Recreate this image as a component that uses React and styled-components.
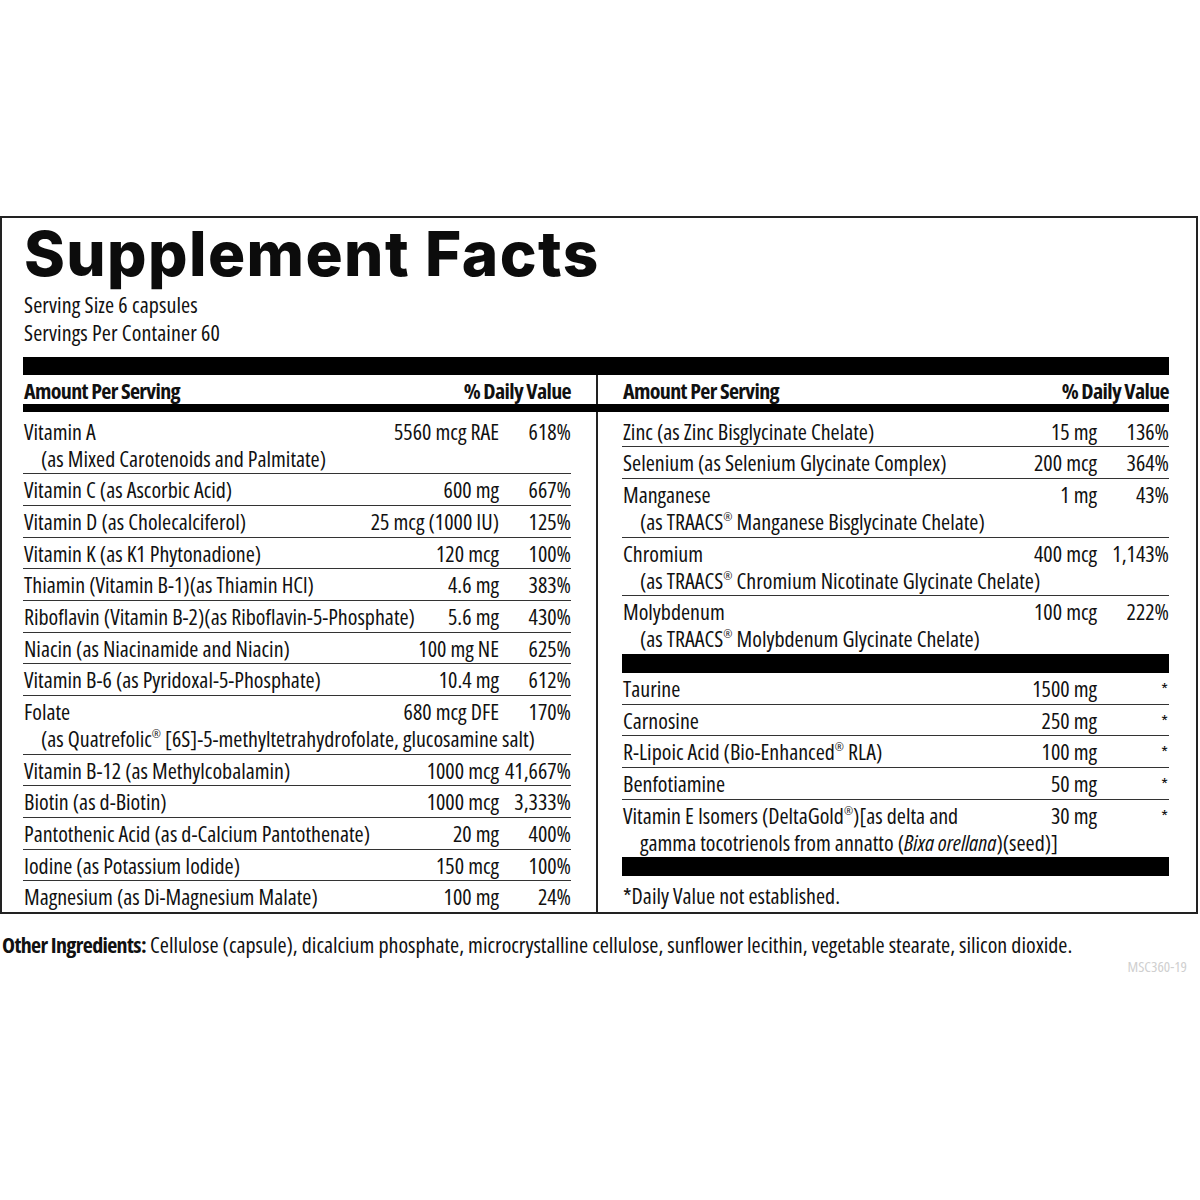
import React from 'react'
import styled, { createGlobalStyle } from 'styled-components'

const GlobalStyle = createGlobalStyle`
  body {
    margin: 0;
    background: #fff;
    color: #111;
  }
`

const Reg = styled.sup`
  font-size: 0.5em;
  line-height: 0;
  vertical-align: 0.8em;
`

const left = [
  { name: 'Vitamin A', sub: '(as Mixed Carotenoids and Palmitate)', amount: '5560 mcg RAE', dv: '618%' },
  { name: 'Vitamin C (as Ascorbic Acid)', amount: '600 mg', dv: '667%' },
  { name: 'Vitamin D (as Cholecalciferol)', amount: '25 mcg (1000 IU)', dv: '125%' },
  { name: 'Vitamin K (as K1 Phytonadione)', amount: '120 mcg', dv: '100%' },
  { name: 'Thiamin (Vitamin B-1)(as Thiamin HCl)', amount: '4.6 mg', dv: '383%' },
  { name: 'Riboflavin (Vitamin B-2)(as Riboflavin-5-Phosphate)', amount: '5.6 mg', dv: '430%' },
  { name: 'Niacin (as Niacinamide and Niacin)', amount: '100 mg NE', dv: '625%' },
  { name: 'Vitamin B-6 (as Pyridoxal-5-Phosphate)', amount: '10.4 mg', dv: '612%' },
  {
    name: 'Folate',
    sub: <>(as Quatrefolic<Reg>®</Reg> [6S]-5-methyltetrahydrofolate, glucosamine salt)</>,
    amount: '680 mcg DFE',
    dv: '170%'
  },
  { name: 'Vitamin B-12 (as Methylcobalamin)', amount: '1000 mcg', dv: '41,667%' },
  { name: 'Biotin (as d-Biotin)', amount: '1000 mcg', dv: '3,333%' },
  { name: 'Pantothenic Acid (as d-Calcium Pantothenate)', amount: '20 mg', dv: '400%' },
  { name: 'Iodine (as Potassium Iodide)', amount: '150 mcg', dv: '100%' },
  { name: 'Magnesium (as Di-Magnesium Malate)', amount: '100 mg', dv: '24%' }
]

const minerals = [
  { name: 'Zinc (as Zinc Bisglycinate Chelate)', amount: '15 mg', dv: '136%' },
  { name: 'Selenium (as Selenium Glycinate Complex)', amount: '200 mcg', dv: '364%' },
  {
    name: 'Manganese',
    sub: <>(as TRAACS<Reg>®</Reg> Manganese Bisglycinate Chelate)</>,
    amount: '1 mg',
    dv: '43%'
  },
  {
    name: 'Chromium',
    sub: <>(as TRAACS<Reg>®</Reg> Chromium Nicotinate Glycinate Chelate)</>,
    amount: '400 mcg',
    dv: '1,143%'
  },
  {
    name: 'Molybdenum',
    sub: <>(as TRAACS<Reg>®</Reg> Molybdenum Glycinate Chelate)</>,
    amount: '100 mcg',
    dv: '222%'
  }
]

const others = [
  { name: 'Taurine', amount: '1500 mg', dv: '*' },
  { name: 'Carnosine', amount: '250 mg', dv: '*' },
  { name: <>R-Lipoic Acid (Bio-Enhanced<Reg>®</Reg> RLA)</>, amount: '100 mg', dv: '*' },
  { name: 'Benfotiamine', amount: '50 mg', dv: '*' },
  {
    name: <>Vitamin E Isomers (DeltaGold<Reg>®</Reg>)[as delta and</>,
    sub: <>gamma tocotrienols from annatto (<i>Bixa orellana</i>)(seed)]</>,
    amount: '30 mg',
    dv: '*'
  }
]

const Page = styled.div`
  width: 1200px;
  height: 1200px;
  padding-top: 216px;
  box-sizing: border-box;
  font-family: "Open Sans", sans-serif;
  font-stretch: 75%;
  font-size: 22px;
`

const Label = styled.div`
  width: 1198px;
  box-sizing: border-box;
  border: 2px solid #222;
  padding: 0 27px 0 21px;
`

const Title = styled.h1`
  margin: 5px 0 0 1px;
  font-family: Inter, "Noto Sans", sans-serif;
  font-stretch: 100%;
  font-weight: 800;
  font-size: 62px;
  line-height: 62px;
  letter-spacing: 1.4px;
  color: #0c0c0c;
`

const Serving = styled.div`
  margin: 5px 0 11px 1px;
  line-height: 28px;
  letter-spacing: 0.1px;
`

const Bar = styled.div`
  height: ${p => p.$h || 18}px;
  background: #000;
`

const Table = styled.div`
  display: grid;
  grid-template-columns: 548px 1fr 547px;
  grid-template-rows: 29px 8px auto;
`

const Head = styled.div`
  grid-row: 1;
  grid-column: ${p => (p.$side === 'left' ? 1 : 3)};
  display: flex;
  justify-content: space-between;
  align-items: center;
  padding-left: 1px;
  font-weight: 700;
  letter-spacing: -0.65px;
`

const Divider = styled.div`
  grid-column: 2;
  grid-row: 1 / 4;
  display: flex;
  justify-content: center;
  padding-left: 1px;

  &::before {
    content: '';
    width: 2px;
    background: #222;
  }
`

const HeadRule = styled.div`
  grid-row: 2;
  grid-column: 1 / -1;
  background: #000;
`

const Column = styled.div`
  grid-row: 3;
  grid-column: ${p => (p.$side === 'left' ? 1 : 3)};
  padding-top: 3.5px;
`

const Group = styled.div``

const Row = styled.div`
  display: grid;
  grid-template-columns: 1fr auto 72px;
  padding: 2px 0 1.7px 1px;
  line-height: 27px;
  border-bottom: 1px solid #333;

  &:last-child {
    border-bottom: none;
  }
`

const Name = styled.span`
  white-space: nowrap;
`

const Amount = styled.span`
  text-align: right;
  white-space: nowrap;
`

const Dv = styled.span`
  text-align: right;
  white-space: nowrap;
  padding-right: ${p => (p.$star ? '1px' : '0')};
  font-size: ${p => (p.$star ? '17px' : 'inherit')};
`

const Sub = styled.span`
  grid-column: 1 / -1;
  padding-left: 17px;
  white-space: nowrap;
`

const Footnote = styled.div`
  line-height: 32px;
  padding: 3px 0 0 1px;
`

const Other = styled.div`
  margin: 17px 0 0 2px;
  line-height: 27px;
  white-space: nowrap;

  b {
    letter-spacing: -0.65px;
  }
`

const Code = styled.div`
  text-align: right;
  padding-right: 13px;
  font-size: 15px;
  line-height: 16px;
  color: #cfcfcf;
`

const Rows = ({ items }) => (
  <Group>
    {items.map((item, i) => (
      <Row key={i}>
        <Name>{item.name}</Name>
        <Amount>{item.amount}</Amount>
        <Dv $star={item.dv === '*'}>{item.dv}</Dv>
        {item.sub && <Sub>{item.sub}</Sub>}
      </Row>
    ))}
  </Group>
)

export default function App() {
  return (
    <Page>
      <GlobalStyle />
      <Label>
        <Title>Supplement Facts</Title>
        <Serving>
          <div>Serving Size 6 capsules</div>
          <div>Servings Per Container 60</div>
        </Serving>
        <Bar />
        <Table>
          <Head $side="left">
            <span>Amount Per Serving</span>
            <span>% Daily Value</span>
          </Head>
          <Divider />
          <Head $side="right">
            <span>Amount Per Serving</span>
            <span>% Daily Value</span>
          </Head>
          <HeadRule />
          <Column $side="left">
            <Rows items={left} />
          </Column>
          <Column $side="right">
            <Rows items={minerals} />
            <Bar $h={19} />
            <Rows items={others} />
            <Bar $h={19} />
            <Footnote>*Daily Value not established.</Footnote>
          </Column>
        </Table>
      </Label>
      <Other>
        <b>Other Ingredients:</b> Cellulose (capsule), dicalcium phosphate, microcrystalline cellulose,
        sunflower lecithin, vegetable stearate, silicon dioxide.
      </Other>
      <Code>MSC360-19</Code>
    </Page>
  )
}
